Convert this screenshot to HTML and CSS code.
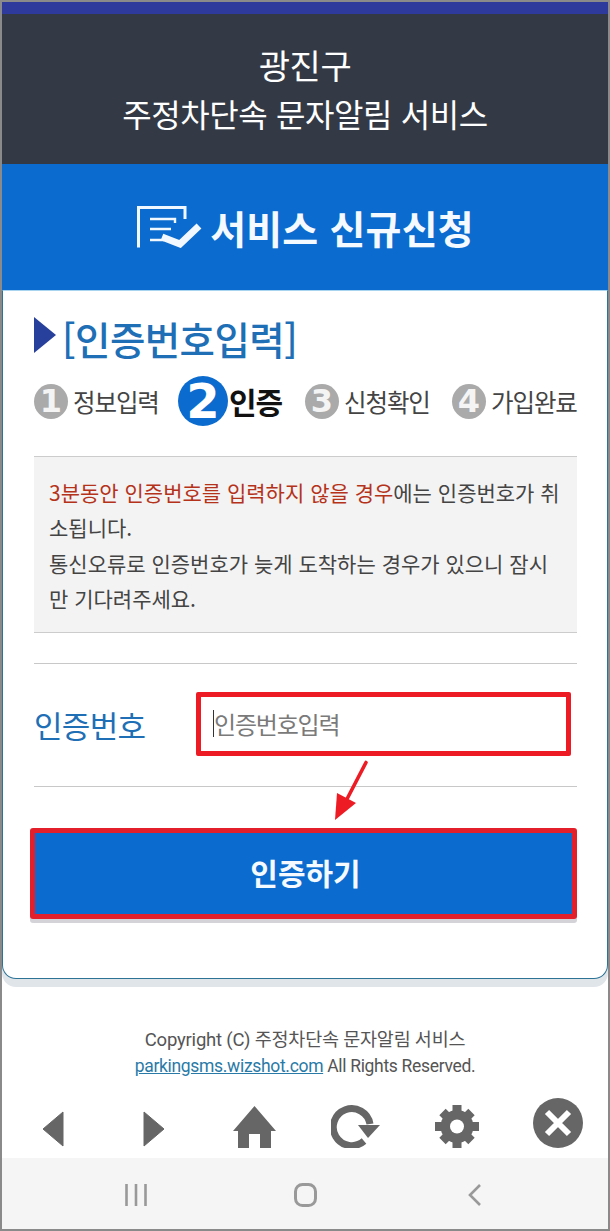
FILE: index.html
```html
<!DOCTYPE html>
<html lang="ko">
<head>
<meta charset="utf-8">
<title>서비스 신규신청</title>
<link rel="stylesheet" href="styles.css">
</head>
<body>
<div class="frame">
  <div class="strip"></div>
  <header class="top">
    <div class="top-1">광진구</div>
    <div>주정차단속 문자알림 서비스</div>
  </header>
  <div class="banner">
    <svg class="banner-icon" width="65" height="42" viewBox="0 0 65 42">
      <path d="M1.5 41.5V1.5H48V13" fill="none" stroke="#f2f8ff" stroke-width="3"/>
      <path d="M13 13H38V17M13 23H34M13 34H27" fill="none" stroke="#f2f8ff" stroke-width="2.4"/>
      <path d="M25 31L43 38L62 20" fill="none" stroke="#f2f8ff" stroke-width="7"/>
    </svg>
    <span>서비스 신규신청</span>
  </div>
  <main class="card">
    <h2 class="title"><i class="tri"></i><span>[인증번호입력]</span></h2>
    <ol class="steps">
      <li class="step s1"><b class="num">1</b><span>정보입력</span></li>
      <li class="step s2 on"><b class="num">2</b><span>인증</span></li>
      <li class="step s3"><b class="num">3</b><span>신청확인</span></li>
      <li class="step s4"><b class="num">4</b><span>가입완료</span></li>
    </ol>
    <div class="notice">
      <p><em>3분동안 인증번호를 입력하지 않을 경우</em>에는 인증번호가 취소됩니다.</p>
      <p>통신오류로 인증번호가 늦게 도착하는 경우가 있으니 잠시만 기다려주세요.</p>
    </div>
    <div class="field">
      <label class="field-label" for="code">인증번호</label>
      <div class="input-box"><i class="caret"></i><span class="placeholder" id="code">인증번호입력</span></div>
      <svg class="arrow" width="40" height="70" viewBox="0 0 40 70">
        <path d="M32 7.500L13 44" fill="none" stroke="#ed1c24" stroke-width="3.600" stroke-linecap="round"/>
        <path d="M1 65L3 38L22 48Z" fill="#ed1c24"/>
      </svg>
    </div>
    <button class="submit" type="button">인증하기</button>
  </main>
  <footer class="foot">
    <div class="copy1">Copyright (C) 주정차단속 문자알림 서비스</div>
    <div class="copy2"><a href="#">parkingsms.wizshot.com</a> All Rights Reserved.</div>
  </footer>
  <nav class="tools">
    <svg class="t-arrow" width="22" height="36" viewBox="0 0 22 36"><path d="M21 1V35L1 18Z" fill="#666" stroke="#666" stroke-linejoin="round"/></svg>
    <svg class="t-arrow" width="22" height="36" viewBox="0 0 22 36"><path d="M1 1V35L21 18Z" fill="#666" stroke="#666" stroke-linejoin="round"/></svg>
    <svg width="43" height="42" viewBox="0 0 43 42"><path d="M21.500 0L43 25H38V42H27V28H16V42H5V25H0Z" fill="#666"/></svg>
    <svg width="49" height="43" viewBox="0 0 49 43"><path d="M39 19A18.500 18.500 0 1 0 33 36" fill="none" stroke="#666" stroke-width="7"/><path d="M27 20H49L37 33Z" fill="#666"/></svg>
    <svg width="44" height="43" viewBox="0 0 44 43"><circle cx="22" cy="21.500" r="16.500" fill="#666"/><path d="M22 0V43M0 21.500H44M7.500 7L36.500 36M36.500 7L7.500 36" stroke="#666" stroke-width="9"/><circle cx="22" cy="21.500" r="7" fill="#fff"/></svg>
    <svg width="50" height="50" viewBox="0 0 50 50"><circle cx="25" cy="25" r="25" fill="#666"/><path d="M14 14L36 36M36 14L14 36" stroke="#fff" stroke-width="6"/></svg>
  </nav>
  <div class="android">
    <svg width="22" height="22" viewBox="0 0 22 22"><path d="M1.500 0V22M11 0V22M20.500 0V22" stroke="#999" stroke-width="2.600"/></svg>
    <svg class="android-home" width="23" height="24" viewBox="0 0 23 24"><rect x="1.500" y="1.500" width="20" height="21" rx="7" fill="none" stroke="#999" stroke-width="3"/></svg>
    <svg width="13" height="22" viewBox="0 0 13 22"><path d="M12 1L2 11L12 21" fill="none" stroke="#999" stroke-width="2.600"/></svg>
  </div>
</div>
</body>
</html>
```

FILE: styles.css
```css
* { box-sizing: border-box; }
html, body { margin: 0; padding: 0; background: #fff; }
body { font-family: "Noto Sans CJK KR", "Noto Sans", sans-serif; }
.frame {
  width: 610px; height: 1231px; border: 2px solid #8a8a8a;
  display: flex; flex-direction: column; overflow: hidden; background: #fff;
}
.strip { height: 12px; background: #2e3b9c; flex: none; }
.top {
  height: 150px; flex: none; background: #343a45; color: #fff;
  font-size: 32px; line-height: 49px; text-align: center; padding-top: 26px;
  letter-spacing: -0.4px;
}
.top-1 { font-size: 34px; }
.banner {
  height: 126px; flex: none; background: #0b6bce; color: #f4faff;
  display: flex; align-items: center; justify-content: center; gap: 8px;
  font-size: 39px; font-weight: 700; padding: 0 1px 0 2px; letter-spacing: 0.2px;
}
.banner-icon { flex: none; }
.card {
  height: 689px; flex: none; background: #fff; padding: 0 30px 0 31px;
  border: 1px solid #2c7396; border-top: 1px solid #a8d4f0; border-radius: 0 0 14px 14px;
  box-shadow: 0 8px 0 #e0e5ea;
  display: flex; flex-direction: column;
}
.title {
  margin: 21px 0 0; height: 48px; display: flex; align-items: center; gap: 6px;
  font-size: 38.5px; font-weight: 500; color: #1e6fb5; letter-spacing: -0.6px;
}
.title span { padding-top: 4px; }
.tri {
  width: 0; height: 0; flex: none; margin-top: -2px;
  border-left: 22px solid #27409b; border-top: 18px solid transparent; border-bottom: 18px solid transparent;
}
.steps {
  list-style: none; margin: 11px 0 0; padding: 0; height: 60px;
  display: flex; align-items: center;
}
.step { display: flex; align-items: center; font-size: 24.5px; letter-spacing: -1.1px; color: #444; flex: none; }
.s1 { width: 144px; gap: 5px; }
.s2 { width: 127px; gap: 1px; }
.s3 { width: 147px; gap: 5px; }
.s4 { gap: 5px; }
.num {
  width: 34px; height: 35px; border-radius: 50%; background: #aaa; color: #f4f4f4;
  display: flex; align-items: center; justify-content: center; flex: none;
  font-family: "DejaVu Sans", sans-serif; font-size: 32px; font-weight: 700; letter-spacing: 0;
}
.on { font-size: 30px; font-weight: 700; color: #111; letter-spacing: -1px; }
.on .num { width: 50px; height: 50px; background: #0b6bce; color: #fff; font-size: 48px; }
.notice {
  margin-top: 25px; height: 177px; background: #f3f3f3; flex: none;
  border-top: 1px solid #ccc; border-bottom: 1px solid #ccc;
  padding: 18px 15px 0; font-size: 21px; line-height: 35.3px; color: #444;
}
.notice p { margin: 0; }
.notice em { font-style: normal; color: #b5321a; }
.field {
  margin-top: 30px; height: 124px; position: relative; flex: none;
  border-top: 1px solid #c8c8c8; border-bottom: 1px solid #c8c8c8;
  display: flex; align-items: center;
}
.field-label { width: 162px; font-size: 31px; color: #1e6fb5; letter-spacing: -0.7px; padding-bottom: 2px; }
.input-box {
  width: 375px; height: 64px; border: 5px solid #ed1c24; border-radius: 2px;
  display: flex; align-items: center; padding: 0 0 2px 12px; margin-top: -2px;
  font-size: 24px; color: #7a7a7a; letter-spacing: -1.2px;
}
.caret { width: 1px; height: 27px; background: #333; flex: none; }
.arrow { position: absolute; left: 300px; top: 91px; }
.submit {
  margin: 41px 0 0 -4px; height: 91px; flex: none;
  padding: 0 0 3px 4px;
  background: #0b6bce; color: #f4faff; border: 5px solid #e21f2b; border-radius: 3px;
  box-shadow: 0 4px 0 #d3d3d8;
  font: 700 30px "Noto Sans CJK KR", sans-serif; letter-spacing: 0;
}
.foot { flex: none; margin-top: 48px; text-align: center; color: #555; }
.copy1 { font-family: Roboto, "Noto Sans CJK KR", sans-serif; font-size: 18.5px; line-height: 26px; letter-spacing: -0.2px; }
.copy2 { font-family: Roboto, "Noto Sans CJK KR", sans-serif; font-size: 17.5px; line-height: 27px; letter-spacing: -0.32px; }
.copy2 a { color: #2a7aa8; }
.tools {
  flex: none; height: 78px;
  display: grid; grid-template-columns: repeat(6, 101px);
  justify-items: center; align-items: end; padding-bottom: 10px;
}
.t-arrow { margin-bottom: 1px; }
.android {
  flex: 1; background: #f5f5f5; display: flex; align-items: center;
  padding: 3px 127px 0 123px; justify-content: space-between;
}
.android-home { margin: 0 2px 0 -2px; }
```
